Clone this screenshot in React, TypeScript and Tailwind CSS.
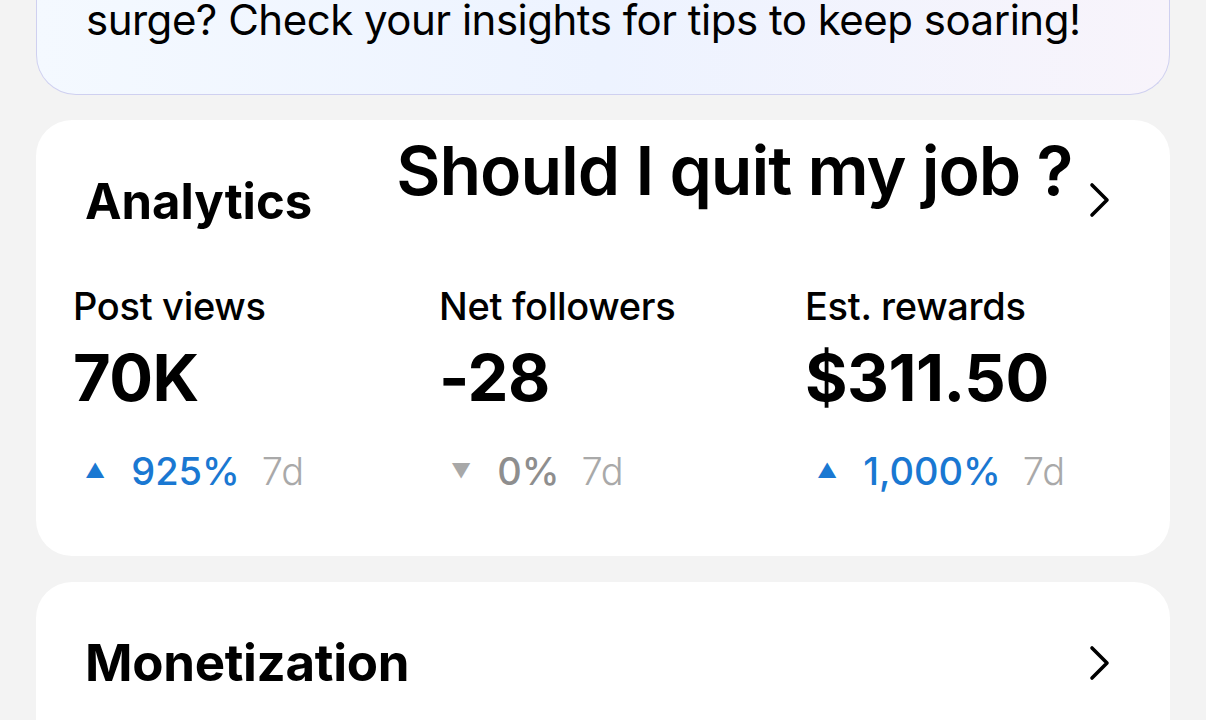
function Chevron() {
    return (
        <svg width="24" height="36" viewBox="0 0 24 36" fill="none" className="text-black">
            <polyline points="4,3 19,18 4,33" stroke="currentColor" strokeWidth="3.6" strokeLinecap="round" strokeLinejoin="round" />
        </svg>
    )
}

function Stat({ label, value, change, up, muted }: { label: string; value: string; change: string; up: boolean; muted?: boolean }) {
    const color = muted ? "text-[#8e8e8e]" : "text-[#1a78d2]"
    return (
        <div className="flex flex-col">
            <div className="text-[38px] font-medium leading-none text-black tracking-[-0.3px]">{label}</div>
            <div className="mt-[20px] text-[65px] font-bold leading-none text-black tracking-[-0.5px]">{value}</div>
            <div className="mt-[42px] flex items-center text-[38px] leading-none">
                <span className={`ml-[12px] text-[20px] ${muted ? "text-[#a8a8a8]" : "text-[#1a78d2]"}`}>{up ? "▲" : "▼"}</span>
                <span className={`ml-[26px] font-medium ${color}`}>{change}</span>
                <span className="ml-[22px] text-[#a9a9a9] font-light">7d</span>
            </div>
        </div>
    )
}

export default function App() {
    return (
        <div className="w-[1206px] h-[720px] overflow-hidden bg-[#f3f3f3] font-['Inter',sans-serif]">
            <div className="mx-[36px] h-[95px] rounded-b-[40px] border border-t-0 border-[#cfd0f0] bg-gradient-to-r from-[#f4f9ff] via-[#edf3ff] to-[#f8f4fb] px-[49px] pt-0">
                <div className="text-[42px] leading-[40px] text-black tracking-[-0.5px]">
                    surge? Check your insights for tips to keep soaring!
                </div>
            </div>

            <div className="mx-[36px] mt-[25px] h-[436px] rounded-[36px] bg-white">
                <div className="flex items-start pl-[49px] pr-[58px] pt-[16px]">
                    <div className="mt-[41px] text-[49px] font-bold leading-none text-black tracking-[0px]">Analytics</div>
                    <div className="ml-[84px] text-[68px] font-semibold leading-none text-black tracking-[-1px]">Should I quit my job ?</div>
                    <div className="ml-auto mt-[46px]"><Chevron /></div>
                </div>
                <div className="mt-[61px] grid grid-cols-[366px_366px_1fr] pl-[37px]">
                    <Stat label="Post views" value="70K" change="925%" up />
                    <Stat label="Net followers" value="-28" change="0%" up={false} muted />
                    <Stat label="Est. rewards" value="$311.50" change="1,000%" up />
                </div>
            </div>

            <div className="mx-[36px] mt-[26px] h-[200px] rounded-[36px] bg-white">
                <div className="flex items-center pl-[49px] pr-[58px] pt-[55px]">
                    <div className="text-[51px] font-bold leading-none text-black tracking-[-0.3px]">Monetization</div>
                    <div className="ml-auto"><Chevron /></div>
                </div>
            </div>
        </div>
    )
}
